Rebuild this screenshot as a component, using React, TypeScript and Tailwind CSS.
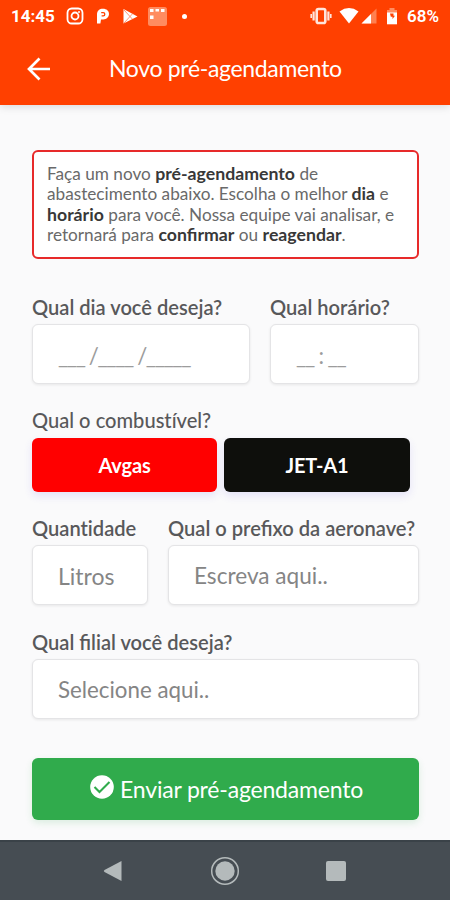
import React from "react";

function StatusBar() {
  return (
    <div className="flex h-8 items-center pl-[11px] pr-[10px] text-white">
      <span className="w-[44px] whitespace-nowrap font-['Roboto',sans-serif] text-[17px] font-bold leading-none">14:45</span>
      <svg className="ml-[11px] h-[18px] w-[18px]" viewBox="0 0 18 18" fill="none" stroke="currentColor" strokeWidth="1.8">
        <rect x="1.5" y="1.5" width="15" height="15" rx="4.3" />
        <circle cx="9" cy="9" r="3.5" />
        <circle cx="13" cy="5" r="1" fill="currentColor" stroke="none" />
      </svg>
      <svg className="ml-[12px] h-[16px] w-[14px]" viewBox="0 0 14 16">
        <path d="M1 15.5V6.5C1 2.8 3.4.8 7 .8s6 2.2 6 5.2-2.4 5.4-5.6 5.4H5l-.6 4.1Z" fill="#fff" />
        <path d="M5.2 4.6h2a1.6 1.6 0 0 1 0 3.2H5.6" fill="none" stroke="#ff4000" strokeWidth="1.3" />
      </svg>
      <svg className="ml-[13px] h-[17px] w-[15px]" viewBox="0 0 15 17">
        <path d="M.5 1v14.5L14.5 8.5Z" fill="#fff" />
        <path d="m1 2 8.5 9.2M1 15l8.5-9.2" stroke="#ff8a62" strokeWidth="0.9" />
      </svg>
      <svg className="ml-[10px] h-[19px] w-[19px]" viewBox="0 0 19 19">
        <rect width="19" height="19" rx="2.5" fill="#ff8c60" />
        <path d="M2 2h3.5v3H2zM7.5 2H11v2.5H7.5zM13 2h3.5v3H13zM2 8.5h3.5v3.5H2z" fill="#fff" />
      </svg>
      <span className="ml-[15px] h-[5px] w-[5px] rounded-full bg-white" />
      <svg className="ml-auto h-[18px] w-[22px]" viewBox="0 0 22 18" fill="none" stroke="#ffe5dc" strokeWidth="1.6">
        <rect x="6.7" y="2" width="8.6" height="14" rx="1.8" strokeWidth="2.6" />
        <path d="M3.6 4.5v9M18.4 4.5v9" strokeWidth="2.2" />
        <path d="M1.2 7v4M20.8 7v4" />
      </svg>
      <svg className="ml-[7px] h-[16px] w-[20px]" viewBox="0 0 20 16" fill="#fff">
        <path d="M10 15.5.5 3.5Q10-3.3 19.5 3.5Z" />
      </svg>
      <svg className="ml-[2px] h-[16px] w-[16px]" viewBox="0 0 16 16">
        <path d="M15.5.5v15H.5Z" fill="#ff8050" />
        <path d="M10 6v9.5H.5Z" fill="#fff" />
      </svg>
      <svg className="ml-[9px] h-[17px] w-[12px]" viewBox="0 0 12 17">
        <path d="M3.5 0h5v2H11v3.5H1V2h2.5Z" fill="#ff8d62" />
        <path d="M1 4.5h10v11.8H1z" fill="#fff" />
        <path d="M4 5.5h3.5v2.2H9L6.5 11V8.7H4.8Z" fill="#ff4000" />
      </svg>
      <span className="ml-[9px] w-[33px] whitespace-nowrap pt-px font-['Roboto',sans-serif] text-[17px] font-semibold leading-none">68%</span>
    </div>
  );
}

function Field({ label, children, className = "" }: {
  label: string;
  children: React.ReactNode;
  className?: string;
}) {
  return (
    <div className={className}>
      <div className="h-[28px] whitespace-nowrap text-[20.1px] font-semibold leading-[22px] text-[#58585a]">{label}</div>
      <div className="flex h-[60px] items-center whitespace-pre rounded-[6px] border border-[#e4e4e6] bg-white pl-[25px] pt-[2px] text-[22.3px] text-[#858585] shadow-[0_1px_3px_rgba(0,0,0,0.08)]">
        {children}
      </div>
    </div>
  );
}

export default function App() {
  return (
    <div className="flex h-[900px] w-[450px] flex-col overflow-hidden bg-[#fafafb] font-['Lato',sans-serif]">
      <header className="z-10 h-[105px] shrink-0 bg-[#ff4000] text-white shadow-[0_2px_8px_rgba(0,0,0,0.13)]">
        <StatusBar />
        <div className="flex h-[73px] items-center pl-[26px]">
          <svg className="h-[24px] w-[24px]" viewBox="0 0 24 24" fill="none" stroke="currentColor" strokeWidth="2.7">
            <path d="M24 12H3M13.5 1.5 3 12l10.5 10.5" />
          </svg>
          <h1 className="ml-[59px] whitespace-nowrap pb-px text-[23px] leading-none tracking-[-0.33px]">Novo pré-agendamento</h1>
        </div>
      </header>

      <main className="flex-1 pl-8 pr-[31px] pt-[45px]">
        <div className="h-[109px] w-[387px] whitespace-nowrap rounded-[6px] border-2 border-[#e72a2a] bg-white pl-[13px] pt-[12px] text-[17.2px] leading-[20.3px] text-[#696969]">
          <p>Faça um novo <strong className="text-[17.7px] leading-none text-[#383838]">pré-agendamento</strong> de</p>
          <p>abastecimento abaixo. Escolha o melhor <strong className="text-[17.7px] leading-none text-[#383838]">dia</strong> e</p>
          <p><strong className="text-[17.7px] leading-none text-[#383838]">horário</strong> para você. Nossa equipe vai analisar, e</p>
          <p>retornará para <strong className="text-[17.7px] leading-none text-[#383838]">confirmar</strong> ou <strong className="text-[17.7px] leading-none text-[#383838]">reagendar</strong>.</p>
        </div>

        <div className="mt-[37px] flex gap-[20px]">
          <Field label="Qual dia você deseja?" className="w-[218px]"><span className="pt-[1px] tracking-[-1.4px] text-[#9c9c9c]">___ /____ /_____</span></Field>
          <Field label="Qual horário?" className="w-[149px]"><span className="pt-[1px] tracking-[-1.2px] text-[#9c9c9c]">__ : __</span></Field>
        </div>

        <div className="mt-[25px]">
          <div className="h-[29px] text-[20.1px] font-medium leading-[22px] text-[#58585a] [font-variant-ligatures:none]">Qual o combustível?</div>
          <div className="flex gap-[7px] text-[20px] font-bold tracking-[-0.15px] text-white">
            <button className="h-[54px] w-[185px] rounded-[6px] bg-[#ff0000] shadow-[0_4px_9px_rgba(70,60,220,0.12)]">Avgas</button>
            <button className="h-[54px] w-[186px] rounded-[6px] bg-[#0e0f0c] shadow-[0_4px_9px_rgba(70,60,220,0.12)]">JET-A1</button>
          </div>
        </div>

        <div className="mt-[25px] flex gap-[20px]">
          <Field label="Quantidade" className="w-[116px] [font-variant-ligatures:none]"><span className="text-[23px]">Litros</span></Field>
          <Field label="Qual o prefixo da aeronave?" className="w-[251px]"><span className="text-[22.6px]">Escreva aqui..</span></Field>
        </div>

        <Field label="Qual filial você deseja?" className="mt-[26px] w-[387px]">Selecione aqui..</Field>

        <button className="mt-[39px] flex h-[62px] w-[387px] items-center rounded-[6px] bg-[#30ab4c] pl-[58px] text-[23px] text-white shadow-[0_3px_7px_rgba(48,171,76,0.15)]">
          <svg className="mb-[4px] h-[24px] w-[24px]" viewBox="0 0 24 24">
            <circle cx="12" cy="12" r="11.8" fill="#fff" />
            <path d="m4.5 12 5 5L19.5 7" fill="none" stroke="#30ab4c" strokeWidth="2.1" />
          </svg>
          <span className="ml-[6px] whitespace-nowrap tracking-[-0.18px]">Enviar pré-agendamento</span>
        </button>
      </main>

      <nav className="flex h-[60px] shrink-0 items-center border-t-2 border-[#3a4248] bg-[#464d53] pb-px pl-[103px]">
        <svg className="h-[22px] w-[19px]" viewBox="0 0 19 22"><path d="M1.5 10 18.5 1v20L1.5 12Q0 11 1.5 10Z" fill="#b4babb" /></svg>
        <svg className="ml-[88px] h-[30px] w-[30px]" viewBox="0 0 30 30">
          <circle cx="15" cy="15" r="13.3" fill="none" stroke="#b4babb" strokeWidth="1.5" />
          <circle cx="15" cy="15" r="9.7" fill="#b4babb" />
        </svg>
        <span className="ml-[86px] h-[20px] w-[20px] rounded-[2px] bg-[#b4babb]" />
      </nav>
    </div>
  );
}
